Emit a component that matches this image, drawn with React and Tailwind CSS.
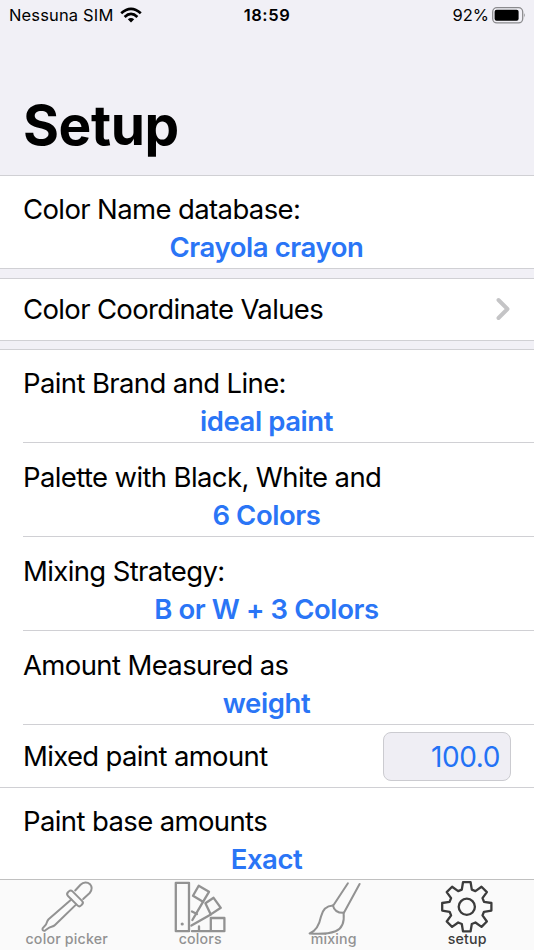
import { ChevronRight } from "lucide-react";

const paintRows = [
  { label: "Paint Brand and Line:", value: "ideal paint", className: "h-[93px] pt-[14px]" },
  { label: "Palette with Black, White and", value: "6 Colors", className: "h-[94px] pt-[15px]" },
  { label: "Mixing Strategy:", value: "B or W + 3 Colors", className: "h-[94px] pt-[15px]" },
  { label: "Amount Measured as", value: "weight", className: "h-[94px] pt-[15px]" },
];

const tabs = [
  { name: "color picker", Icon: PickerIcon },
  { name: "colors", Icon: SwatchIcon },
  { name: "mixing", Icon: BrushIcon },
  { name: "setup", Icon: GearIcon, active: true },
];

export default function App() {
  return (
    <main className="flex h-[950px] w-[534px] flex-col overflow-hidden bg-[#f1f0f6] font-['Inter','Liberation_Sans',sans-serif] text-black">
      <StatusBar />

      <header className="flex h-[146px] items-end border-b border-[#d0d0d4] px-[23px] pb-4">
        <h1 className="text-[55px] leading-[68px] font-bold tracking-[-0.4px]">Setup</h1>
      </header>

      <section className="h-[93px] border-b border-[#d0d0d4] bg-white pl-[23px]">
        <Choice label="Color Name database:" value="Crayola crayon" className="pt-[14px]" />
      </section>

      <section className="mt-[9px] flex h-[63px] items-center justify-between border-y border-[#d0d0d4] bg-white pr-[13px] pb-px pl-[23px]">
        <span className="text-[27.5px] leading-[38px] tracking-[-0.65px]">Color Coordinate Values</span>
        <ChevronRight className="h-9 w-9 text-[#c4c4c6]" strokeWidth={2.6} />
      </section>

      <section className="mt-2 flex flex-col border-t border-[#d0d0d4] bg-white">
        {paintRows.map((row) => (
          <div key={row.label} className="pl-[23px]">
            <Choice {...row} divider />
          </div>
        ))}

        <div className="flex h-[63px] items-center justify-between border-b border-[#d0d0d4] px-[23px]">
          <span className="text-[27.5px] leading-[38px] tracking-[-0.65px]">Mixed paint amount</span>
          <div className="flex h-[49px] w-[128px] items-center justify-end rounded-lg border border-[#cbcbd0] bg-[#efeef4] pt-px pr-[10px] text-[28px] tracking-[-0.4px] text-[#2372f5]">
            100.0
          </div>
        </div>

        <div className="h-[91px] pl-[23px]">
          <Choice label="Paint base amounts" value="Exact" className="pt-[14px]" />
        </div>
      </section>

      <nav className="grid flex-1 grid-cols-4 border-t border-[#c0c0c0] bg-[#fafafa] pt-px">
        {tabs.map(({ name, Icon, active }) => (
          <div
            key={name}
            className={`flex flex-col items-center ${active ? "text-[#3c3c3c]" : "text-[#929292]"}`}
          >
            <Icon />
            <span className="-mt-[7px] text-[14.2px] leading-[18px] font-medium tracking-[0.2px] whitespace-nowrap">
              {name}
            </span>
          </div>
        ))}
      </nav>
    </main>
  );
}

function StatusBar() {
  return (
    <div className="grid h-[30px] shrink-0 grid-cols-3 items-center text-[16.5px]">
      <div className="flex items-center gap-[7px] pl-[9px] whitespace-nowrap">
        <span className="tracking-[0.15px]">Nessuna SIM</span>
        <svg viewBox="0 0 22 16" className="h-4 w-[22px]" fill="none" stroke="currentColor" strokeWidth="2.7">
          <path d="M1.2 6.3 Q11 -2.5 20.8 6.3" />
          <path d="M4.6 9.9 Q11 4 17.4 9.9" />
          <path d="M11 15.4 L7.8 12.3 Q11 9.6 14.2 12.3 Z" fill="currentColor" stroke="none" />
        </svg>
      </div>
      <span className="text-center font-semibold tracking-[0.6px]">18:59</span>
      <div className="flex items-center justify-end gap-[3px] pr-[8px]">
        <span>92%</span>
        <svg viewBox="0 0 34 17" className="h-[17px] w-[34px]">
          <rect x="0.7" y="0.7" width="30" height="15.2" rx="4.2" fill="none" stroke="#8b8b8e" strokeWidth="1.3" />
          <rect x="2.6" y="2.8" width="24" height="11" rx="2" fill="black" />
          <path d="M32.2 6 Q34 8.3 32.2 10.6 Z" fill="#8b8b8e" />
        </svg>
      </div>
    </div>
  );
}

function Choice({ label, value, className, divider }) {
  return (
    <div className={`${className} ${divider ? "border-b border-[#d0d0d4]" : ""}`}>
      <p className="text-[27.5px] leading-[38px] tracking-[-0.62px]">{label}</p>
      <p className="pr-[24px] text-center text-[27.5px] leading-[38px] font-semibold tracking-[-0.42px] text-[#2a75f6]">
        {value}
      </p>
    </div>
  );
}

function TabIcon({ children, strokeWidth = 2 }) {
  return (
    <svg
      viewBox="0 0 56 56"
      className="h-14 w-14 shrink-0"
      fill="none"
      stroke="currentColor"
      strokeWidth={strokeWidth}
      strokeLinecap="round"
      strokeLinejoin="round"
    >
      {children}
    </svg>
  );
}

function PickerIcon() {
  return (
    <TabIcon>
      <path d="M36.2 9.5 L41.5 3.8 C44.5 0.8 48.5 1 51 3.2 C53.3 6 53 9.3 50.7 12 L44.2 18" />
      <rect x="26.7" y="14.2" width="18.6" height="6.4" rx="2.6" transform="rotate(45 36 17.4)" />
      <path d="M32.3 18.4 L9.6 38.2 C7.4 40.3 8.2 42.6 6.2 44.4 L3.6 47.4 C3 49.4 4.6 50.4 6.4 49.3 L9.6 47 C11.6 45.4 14 46 16 44 L37 23.6" />
    </TabIcon>
  );
}

function SwatchIcon() {
  return (
    <TabIcon strokeWidth={2.3}>
      <rect x="3.8" y="1.8" width="13.2" height="48.4" />
      <circle cx="10.2" cy="43" r="1.6" fill="currentColor" stroke="none" />
      <path d="M26.7 4.8 L37 10.8 L31 20.8 L21 14.8 Z" />
      <path d="M31 20.8 L20.4 39 M20 30.5 L25 33" />
      <path d="M33.4 22.3 L41.6 16.8 L48.8 26.8 L38.8 33.4 Z" />
      <path d="M38.8 33.4 L19.4 44.6" />
      <path d="M38.8 37 H52.4 V50.2 H38.8 Z M38.8 50.2 H20 M27 45.5 V50" />
    </TabIcon>
  );
}

function BrushIcon() {
  return (
    <TabIcon>
      <path d="M41.9 2.3 L27.6 24 M53.6 3 L38.2 31.3" />
      <path d="M26.9 24.4 C28 29 32 32 37.8 31.8" />
      <path d="M26.9 24.4 C20 24.8 16.3 29.5 15 35.5 C13.5 43 10.5 50 3.6 52.4 C13 53.2 24 52.3 29.5 50.2 C37 47.2 38.5 40 37.6 31.8" />
    </TabIcon>
  );
}

function GearIcon() {
  // one tooth, rotated around the hub eight times
  const tooth = [[-5, -17.2], [-3.8, -24.6], [3.8, -24.6], [5, -17.2]];
  const points = Array.from({ length: 8 }).flatMap((_, i) => {
    const a = (i * Math.PI) / 4;
    return tooth.map(([x, y]) => [
      27.8 + x * Math.cos(a) - y * Math.sin(a),
      25.8 + x * Math.sin(a) + y * Math.cos(a),
    ]);
  });

  return (
    <TabIcon strokeWidth={2.3}>
      <polygon points={points.map((p) => p.join(",")).join(" ")} />
      <circle cx="27.8" cy="25.8" r="8.1" />
    </TabIcon>
  );
}
